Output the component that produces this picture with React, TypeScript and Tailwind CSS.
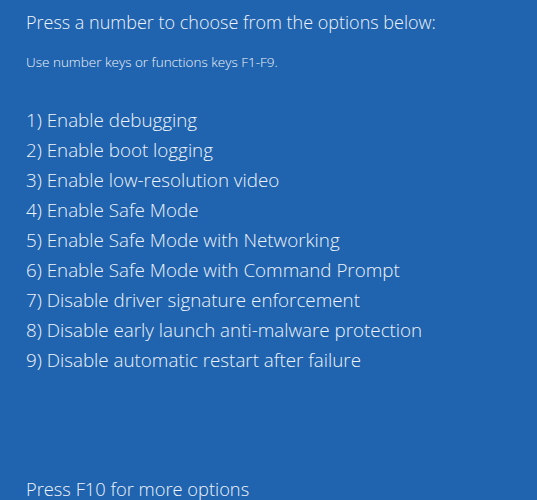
const options = [
  "1) Enable debugging",
  "2) Enable boot logging",
  "3) Enable low-resolution video",
  "4) Enable Safe Mode",
  "5) Enable Safe Mode with Networking",
  "6) Enable Safe Mode with Command Prompt",
  "7) Disable driver signature enforcement",
  "8) Disable early launch anti-malware protection",
  "9) Disable automatic restart after failure",
];

export default function App() {
  return (
    <div className="flex h-[500px] w-[537px] flex-col overflow-hidden bg-[#2063ae] pl-[26px] font-['Open_Sans',sans-serif] font-light text-[#eef3fa]">
      <h1 className="mt-[8px] text-[18px] leading-[28px]">
        Press a number to choose from the options below:
      </h1>
      <p className="mt-[17px] text-[13.5px] leading-[18px]">
        Use number keys or functions keys F1-F9.
      </p>
      <ul className="mt-[34px] flex flex-col">
        {options.map((o) => (
          <li key={o} className="text-[18.8px] leading-[30px]">
            {o}
          </li>
        ))}
      </ul>
      <p className="mt-auto mb-[-4px] text-[18.3px] leading-[30px]">
        Press F10 for more options
      </p>
    </div>
  );
}
